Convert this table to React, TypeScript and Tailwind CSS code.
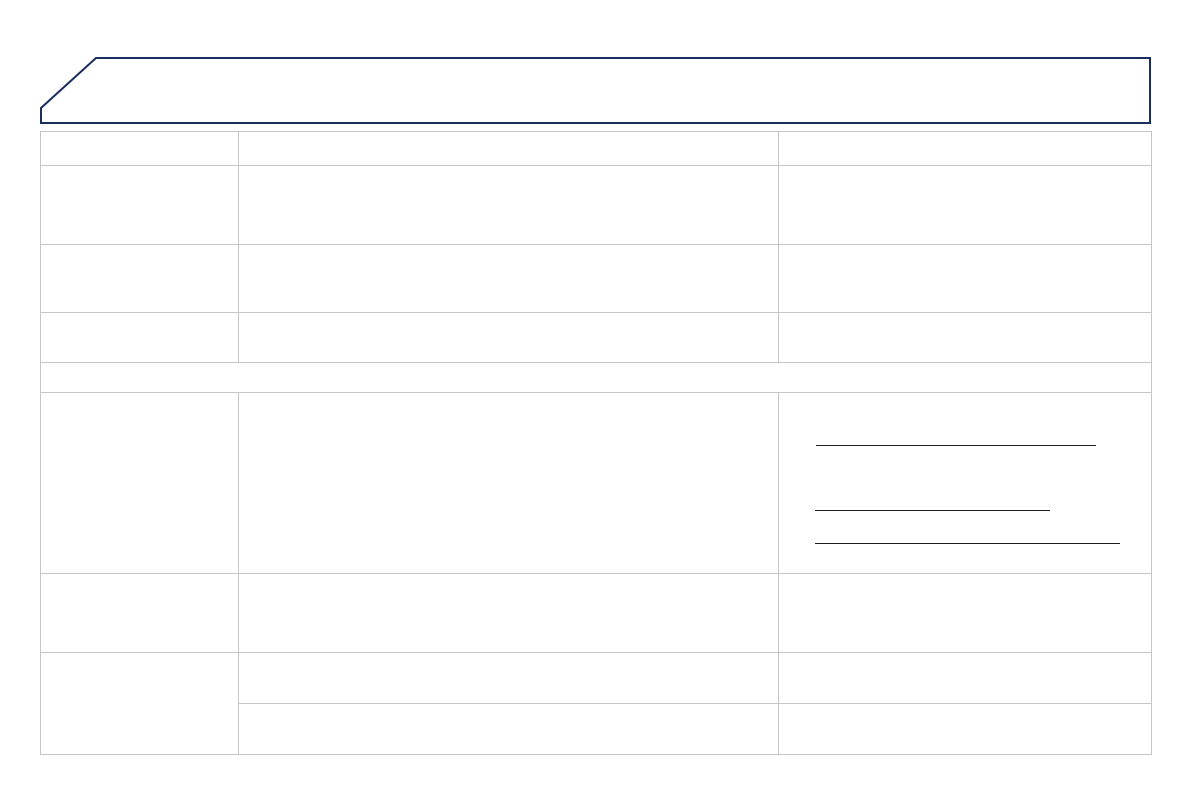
const Cell = ({ className = "" }: { className?: string }) => (
  <div className={`border-r border-b border-[#c6c6c6] ${className}`} />
);

export default function App() {
  return (
    <div className="min-h-[794px] w-[1191px] bg-white pt-[56px] pl-[39px]">
      {/* header with cut corner */}
      <div className="relative h-[69px] w-[1113px]">
        <svg
          className="absolute inset-0"
          width="1113"
          height="69"
          viewBox="0 0 1113 69"
        >
          <path
            d="M57 2 H1111 V67 H2 V52 Z"
            fill="none"
            stroke="#1b2f5e"
            strokeWidth="2"
          />
        </svg>
      </div>

      {/* table */}
      <div className="mt-[6px] ml-px w-[1112px] border-l border-t border-[#c6c6c6]">
        <div className="flex h-[34px]">
          <Cell className="w-[198px]" />
          <Cell className="w-[540px]" />
          <Cell className="w-[373px]" />
        </div>
        <div className="flex h-[79px]">
          <Cell className="w-[198px]" />
          <Cell className="w-[540px]" />
          <Cell className="w-[373px]" />
        </div>
        <div className="flex h-[68px]">
          <Cell className="w-[198px]" />
          <Cell className="w-[540px]" />
          <Cell className="w-[373px]" />
        </div>
        <div className="flex h-[50px]">
          <Cell className="w-[198px]" />
          <Cell className="w-[540px]" />
          <Cell className="w-[373px]" />
        </div>
        <div className="flex h-[30px]">
          <Cell className="w-[1111px]" />
        </div>
        <div className="flex h-[181px]">
          <Cell className="w-[198px]" />
          <Cell className="w-[540px]" />
          <div className="w-[373px] border-r border-b border-[#c6c6c6] pt-[52px]">
            <div className="ml-[37px] h-px w-[280px] bg-[#1e1e1e]" />
            <div className="mt-[64px] ml-[36px] h-px w-[235px] bg-[#1e1e1e]" />
            <div className="mt-[32px] ml-[36px] h-px w-[305px] bg-[#1e1e1e]" />
          </div>
        </div>
        <div className="flex h-[79px]">
          <Cell className="w-[198px]" />
          <Cell className="w-[540px]" />
          <Cell className="w-[373px]" />
        </div>
        <div className="flex h-[102px]">
          <Cell className="w-[198px]" />
          <div className="flex w-[913px] flex-col">
            <div className="flex h-[51px]">
              <Cell className="w-[540px]" />
              <Cell className="w-[373px]" />
            </div>
            <div className="flex h-[51px]">
              <Cell className="w-[540px]" />
              <Cell className="w-[373px]" />
            </div>
          </div>
        </div>
      </div>
    </div>
  );
}
